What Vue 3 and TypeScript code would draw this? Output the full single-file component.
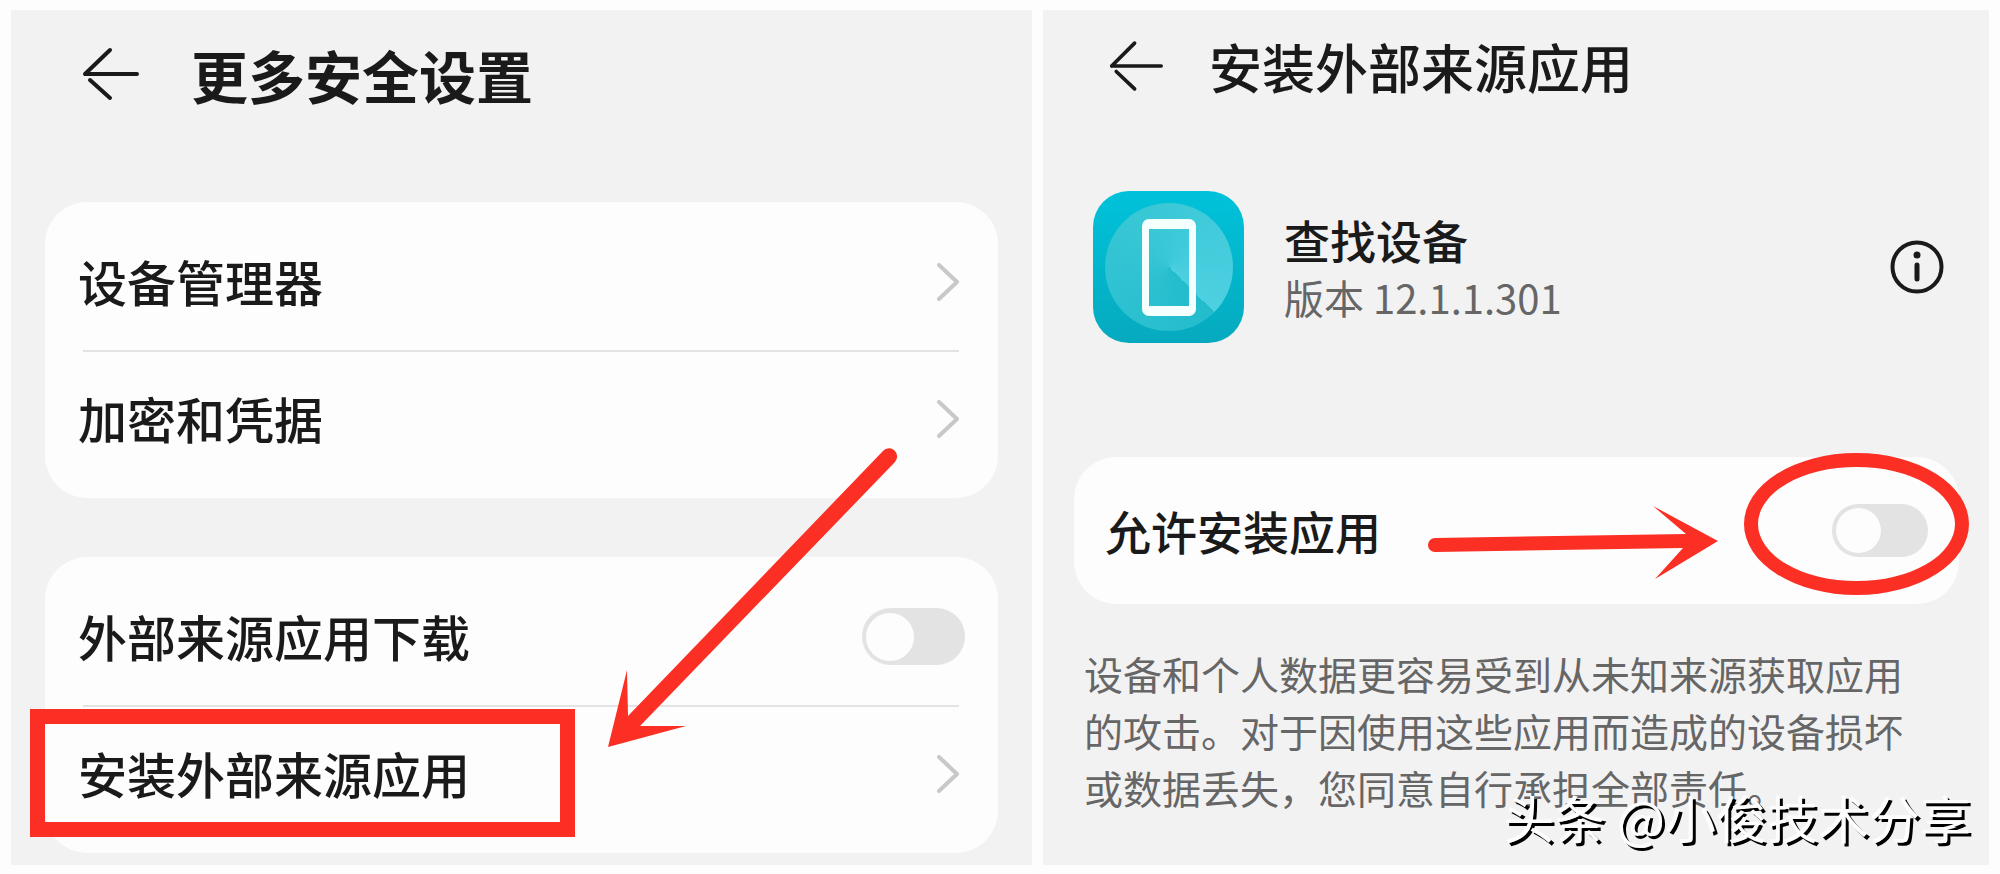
<script setup lang="ts">
import { ref } from 'vue'

interface Row {
  id: string
  label: string
  toggle?: boolean
  marked?: boolean
}

const groups: Row[][] = [
  [
    { id: 'device-admin', label: '设备管理器' },
    { id: 'credentials', label: '加密和凭据' },
  ],
  [
    { id: 'external-download', label: '外部来源应用下载', toggle: true },
    { id: 'external-install', label: '安装外部来源应用', marked: true },
  ],
]

const downloadAllowed = ref(false)
const installAllowed = ref(false)
</script>

<template>
  <main class="board">
    <section class="panel panel-left">
      <header class="head">
        <button class="back" type="button" aria-label="返回">
          <svg viewBox="0 0 60 56" width="60" height="56">
            <path d="M58 28H6M31 4L6 28M11 34L31 52" />
          </svg>
        </button>
        <h1>更多安全设置</h1>
      </header>

      <div class="groups">
        <ul v-for="(rows, i) in groups" :key="i" class="card">
          <li v-for="row in rows" :key="row.id" class="item">
            <label v-if="row.toggle" class="row">
              <span>{{ row.label }}</span>
              <input v-model="downloadAllowed" class="switch" type="checkbox" />
            </label>
            <button v-else class="row" type="button">
              <span>{{ row.label }}</span>
              <svg class="chevron" viewBox="0 0 22 38" width="22" height="38">
                <path d="M2 2L20 19L2 36" />
              </svg>
            </button>
            <span v-if="row.marked" class="mark-box" aria-hidden="true"></span>
          </li>
        </ul>
      </div>

      <svg class="arrow-down" viewBox="0 0 300 310" width="300" height="310" aria-hidden="true">
        <path d="M8 306L27 229L28 275L283 10A8 8 0 0 1 295 21L40 285L86 285Z" />
      </svg>
    </section>

    <section class="panel panel-right">
      <header class="head">
        <button class="back" type="button" aria-label="返回">
          <svg viewBox="0 0 60 56" width="55" height="52">
            <path d="M58 28H4M29 3L4 28M9 34L29 53" />
          </svg>
        </button>
        <h1>安装外部来源应用</h1>
      </header>

      <div class="app">
        <div class="app-icon">
          <div class="radar"></div>
          <div class="phone"></div>
        </div>
        <div class="app-text">
          <h2>查找设备</h2>
          <p>版本 12.1.1.301</p>
        </div>
        <button class="info" type="button" aria-label="应用信息">
          <svg viewBox="0 0 54 54" width="54" height="54">
            <circle class="ring" cx="27" cy="27" r="24.5" />
            <circle cx="27" cy="15" r="3.5" />
            <rect x="24.5" y="22.5" width="5" height="19" rx="2.5" />
          </svg>
        </button>
      </div>

      <div class="card single">
        <label class="row">
          <span>允许安装应用</span>
          <input v-model="installAllowed" class="switch" type="checkbox" />
        </label>
        <svg class="arrow-right" viewBox="0 0 300 80" width="300" height="80" aria-hidden="true">
          <path d="M16 36L267 32L234 4L299 39L236 77L264 46L16 50A7 7 0 0 1 16 36Z" />
        </svg>
        <span class="mark-ellipse" aria-hidden="true"></span>
      </div>

      <p class="note">
        设备和个人数据更容易受到从未知来源获取应用的攻击。对于因使用这些应用而造成的设备损坏或数据丢失，您同意自行承担全部责任。
      </p>

      <p class="credit">头条 @小俊技术分享</p>
    </section>
  </main>
</template>

<style>
body {
  margin: 0;
  background: #fdfdfd;
}
</style>

<style scoped>
.board {
  display: grid;
  grid-template-columns: 1021fr 946fr;
  gap: 11px;
  padding: 10px 11px;
  font-family: 'Noto Sans CJK SC', sans-serif;
  color: #1a1a1a;
}

.panel {
  position: relative;
  box-sizing: border-box;
  background: #f2f2f2;
}

.panel-left {
  padding: 26px 34px 12px 34px;
}

.panel-right {
  padding: 20px 30px 12px 31px;
}

h1,
h2,
p,
ul {
  margin: 0;
  padding: 0;
  font-weight: 500;
}

button {
  border: 0;
  padding: 0;
  background: none;
  font: inherit;
  color: inherit;
}

svg {
  display: block;
}

.head {
  display: flex;
  align-items: center;
}

.back {
  flex: none;
}

.back path {
  fill: none;
  stroke: #1a1a1a;
  stroke-width: 4;
  stroke-linecap: round;
  stroke-linejoin: round;
}

.panel-left .head {
  gap: 52px;
  height: 76px;
  padding-left: 34px;
  margin-bottom: 90px;
}

.panel-left h1 {
  font-size: 57px;
  line-height: 76px;
  font-weight: 700;
}

.panel-right .head {
  gap: 46px;
  height: 72px;
  padding-left: 34px;
}

.panel-right h1 {
  font-size: 53px;
  line-height: 72px;
}

.groups {
  display: grid;
  gap: 59px;
}

.card {
  border-radius: 42px;
  background: #fdfdfd;
}

.groups .card {
  padding: 11px 39px 11px 33px;
  list-style: none;
}

.item {
  position: relative;
}

.item + .item::before {
  content: '';
  position: absolute;
  top: 0;
  left: 5px;
  right: 0;
  border-top: 2px solid #e3e3e3;
}

.row {
  display: flex;
  align-items: center;
  justify-content: space-between;
  width: 100%;
  height: 137px;
  font-size: 49px;
  font-weight: 500;
  text-align: left;
}

.row span {
  padding-bottom: 2px;
}

.chevron path {
  fill: none;
  stroke: #c8c8c8;
  stroke-width: 4;
  stroke-linecap: round;
  stroke-linejoin: round;
}

.switch {
  appearance: none;
  flex: none;
  display: flex;
  align-items: center;
  box-sizing: border-box;
  width: 103px;
  height: 57px;
  margin: 0 -6px 0 0;
  padding: 4px;
  border-radius: 29px;
  background: #e3e3e3;
}

.switch::before {
  content: '';
  width: 48px;
  height: 48px;
  border-radius: 50%;
  background: #fdfdfd;
}

.switch:checked {
  justify-content: flex-end;
  background: #0a59f7;
}

.mark-box {
  position: absolute;
  top: 4px;
  left: -48px;
  box-sizing: border-box;
  width: 545px;
  height: 128px;
  border: 15px solid #fc2f25;
  pointer-events: none;
}

.arrow-down {
  position: absolute;
  right: 132px;
  top: 431px;
  fill: #fc2f25;
  pointer-events: none;
}

.app {
  display: flex;
  align-items: center;
  margin: 89px 15px 114px 19px;
}

.app-icon {
  position: relative;
  flex: none;
  display: grid;
  place-items: center;
  width: 151px;
  height: 152px;
  border-radius: 36px;
  background: linear-gradient(#00c2da, #06aabf);
}

.radar {
  grid-area: 1 / 1;
  width: 128px;
  height: 128px;
  border-radius: 50%;
  background: conic-gradient(from 135deg, #22bccd, #3ac8d6 60%, #4dd0e1);
}

.phone {
  grid-area: 1 / 1;
  box-sizing: border-box;
  width: 54px;
  height: 97px;
  border: solid #f4ffff;
  border-width: 10px 7px;
  border-radius: 7px;
}

.app-text {
  flex: 1;
  padding-left: 40px;
}

.app-text h2 {
  font-size: 46px;
  line-height: 60px;
}

.app-text p {
  font-size: 40px;
  line-height: 56px;
  font-weight: 400;
  color: #666;
}

.info svg {
  fill: #1a1a1a;
}

.info .ring {
  fill: none;
  stroke: #1a1a1a;
  stroke-width: 4;
}

.single {
  position: relative;
  padding: 5px 31px;
}

.single .row {
  font-size: 46px;
}

.single .switch {
  width: 96px;
  height: 53px;
  margin: 0;
}

.single .switch::before {
  width: 45px;
  height: 45px;
}

.arrow-right {
  position: absolute;
  right: 240px;
  top: 45px;
  fill: #fc2f25;
  pointer-events: none;
}

.mark-ellipse {
  position: absolute;
  top: -4px;
  right: -10px;
  box-sizing: border-box;
  width: 225px;
  height: 142px;
  border: 14px solid #fc2f25;
  border-radius: 50%;
  pointer-events: none;
}

.note {
  margin: 41px 40px 0 10px;
  padding-bottom: 2px;
  font-size: 39px;
  line-height: 57px;
  font-weight: 400;
  color: #666;
}

.credit {
  position: absolute;
  right: 18px;
  bottom: 16px;
  font-size: 51px;
  line-height: 64px;
  font-weight: 400;
  color: #fdfdfd;
  text-shadow: 3px 3px 0 #000;
  white-space: nowrap;
}
</style>
